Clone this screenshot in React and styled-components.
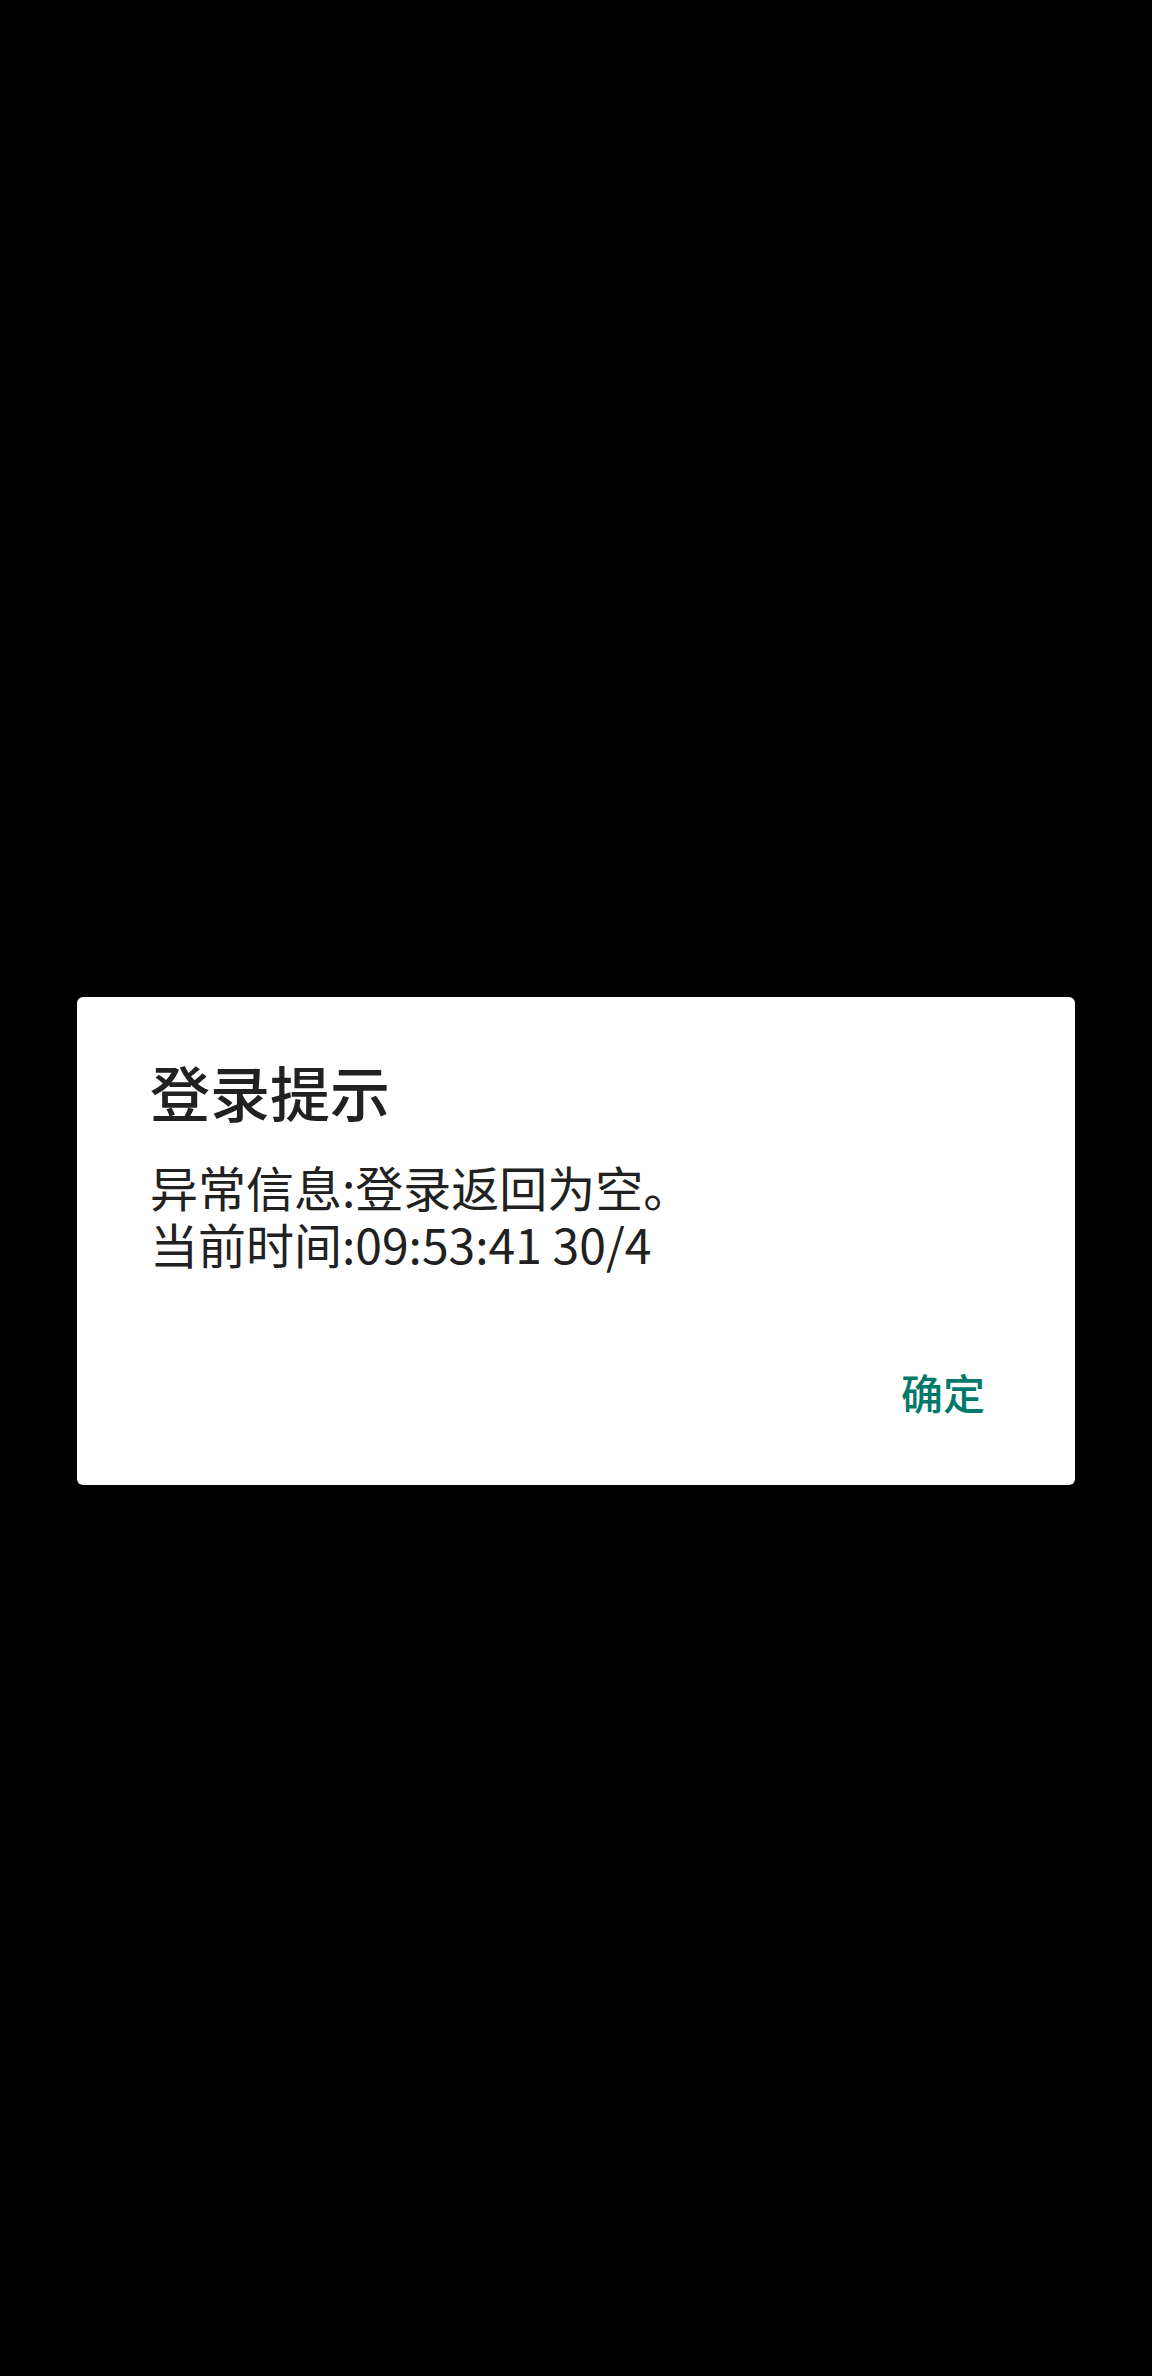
import React from "react";
import styled, { createGlobalStyle } from "styled-components";

const Global = createGlobalStyle`
  html, body { margin: 0; padding: 0; background: #000; }
  body { font-family: "Noto Sans CJK SC", "Noto Sans", sans-serif; }
`;

const Screen = styled.div`
  min-height: 2376px;
  background: #000;
  padding-top: 997px;
  box-sizing: border-box;
  display: flex;
  flex-direction: column;
  align-items: center;
`;

const Dialog = styled.div`
  width: 998px;
  height: 488px;
  box-sizing: border-box;
  background: #fff;
  border-radius: 6px;
  padding: 58px 72px 0 73px;
  display: flex;
  flex-direction: column;
`;

const Title = styled.h2`
  margin: 0;
  font-size: 60px;
  line-height: 72px;
  font-weight: 500;
  color: #212121;
`;

const Message = styled.div`
  margin: 31px 0 0;
  display: flex;
  flex-direction: column;
`;

const Line = styled.span`
  font-size: 48px;
  line-height: 57px;
  font-weight: 400;
  color: #212121;
  white-space: nowrap;
`;

const Actions = styled.div`
  margin-top: auto;
  padding: 0 18px 68px 0;
  display: flex;
  justify-content: flex-end;
`;

const TextButton = styled.button`
  border: 0;
  background: none;
  padding: 0;
  font-family: inherit;
  font-size: 42px;
  line-height: 50px;
  font-weight: 500;
  color: #00796b;
  cursor: pointer;
`;

export default function App() {
  return (
    <>
      <Global />
      <Screen>
        <Dialog>
          <Title>登录提示</Title>
          <Message>
            <Line>异常信息:登录返回为空。</Line>
            <Line>当前时间:09:53:41 30/4</Line>
          </Message>
          <Actions>
            <TextButton>确定</TextButton>
          </Actions>
        </Dialog>
      </Screen>
    </>
  );
}
